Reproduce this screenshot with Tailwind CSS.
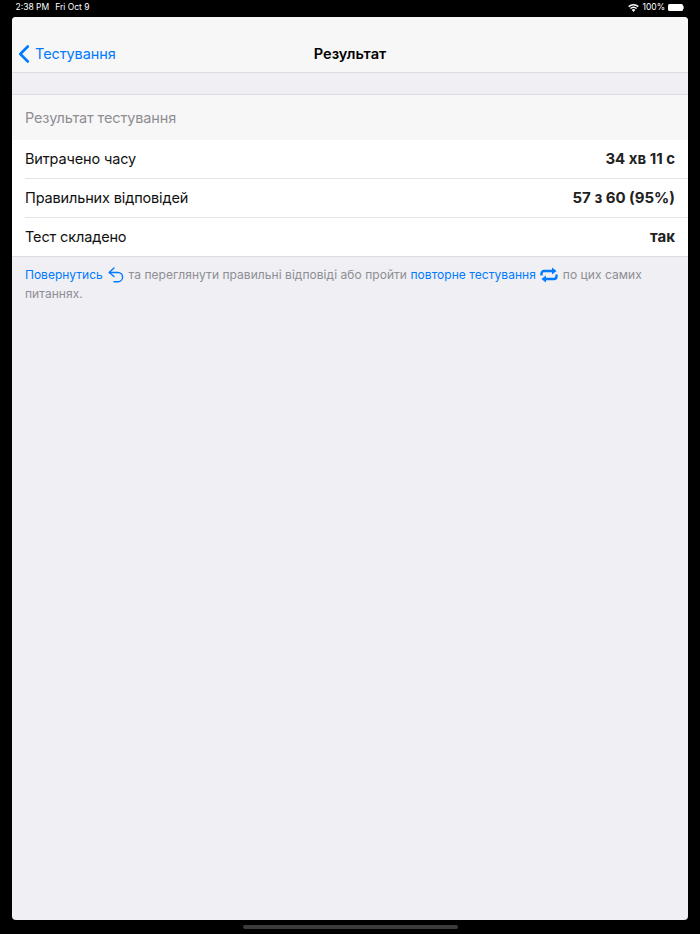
<!DOCTYPE html>
<html lang="uk">
<head>
  <meta charset="UTF-8" />
  <title>Результат</title>
  <script src="https://cdn.jsdelivr.net/npm/@tailwindcss/browser@4"></script>
</head>
<body class="bg-black font-[Inter,'Noto_Sans',sans-serif] w-[700px] h-[934px] overflow-hidden flex flex-col">
  <!-- status bar -->
  <div class="h-[15px] px-[15.5px] flex items-center justify-between text-white text-[8.5px] leading-none">
    <div class="flex gap-[6px]"><span>2:38 PM</span><span>Fri Oct 9</span></div>
    <div class="flex items-center gap-[3px] pr-[0.5px]">
      <svg width="11" height="8" viewBox="0 0 11 8" fill="#fff"><path d="M5.5 8 3.7 5.9a2.7 2.7 0 0 1 3.6 0z"/><path d="M2.9 5.1 1.9 4a5.4 5.4 0 0 1 7.2 0l-1 1.1a4 4 0 0 0-5.2 0z"/><path d="M1.2 3.2.2 2.1a8 8 0 0 1 10.6 0l-1 1.1a6.5 6.5 0 0 0-8.6 0z"/></svg>
      <span>100%</span>
      <div class="flex items-center">
        <div class="w-[15px] h-[7px] bg-white rounded-[1.5px]"></div>
        <div class="w-[1px] h-[3px] bg-white/60"></div>
      </div>
    </div>
  </div>

  <!-- app window -->
  <div class="mx-[12px] mt-[2px] h-[902.5px] w-[676px] rounded-[4px] overflow-hidden bg-[#efeff4] flex flex-col">
    <header class="h-[56px] shrink-0 bg-[#f7f7f7] border-b border-[#dcdce0] flex items-center relative">
      <div class="flex items-center pl-[7px] pt-[19px] text-[#007aff] text-[14.5px] tracking-[-0.1px] leading-none gap-[5px]">
        <svg class="-translate-x-[0.5px]" width="11" height="18" viewBox="0 0 11 18" fill="none" stroke="#007aff" stroke-width="2.6" stroke-linecap="round" stroke-linejoin="round"><path d="M9.3 1.5 1.8 9l7.5 7.5"/></svg>
        <span class="pt-[1px]">Тестування</span>
      </div>
      <div class="absolute inset-x-0 top-0 pt-[28px] text-center text-[14.6px] leading-[18px] font-semibold text-black">Результат</div>
    </header>

    <div class="h-[22px] shrink-0 border-b border-[#dcdce0]"></div>

    <div class="h-[45px] shrink-0 bg-[#f7f7f7] px-[13px] flex items-center text-[14.5px] tracking-[-0.14px] text-[#8e8e93]">Результат тестування</div>

    <div class="bg-white border-b border-[#dcdce0] pl-[13px]">
      <div class="h-[39px] pt-[10px] pr-[13px] flex items-baseline justify-between border-b border-[#e4e4e7] text-[14.5px] leading-[18px] text-[#111]">
        <span class="tracking-[-0.14px]">Витрачено часу</span><span class="text-[15px] font-bold text-[#222]">34 хв 11 с</span>
      </div>
      <div class="h-[39px] pt-[10px] pr-[13px] flex items-baseline justify-between border-b border-[#e4e4e7] text-[14.5px] leading-[18px] text-[#111]">
        <span class="tracking-[-0.14px]">Правильних відповідей</span><span class="text-[15px] font-bold text-[#222]">57 з 60 (95%)</span>
      </div>
      <div class="h-[38px] pt-[10px] pr-[13px] flex items-baseline justify-between text-[14.5px] leading-[18px] text-[#111]">
        <span class="tracking-[-0.14px]">Тест складено</span><span class="text-[15px] font-bold text-[#222]">так</span>
      </div>
    </div>

    <p class="px-[13px] pt-[8px] text-[12px] leading-[19px] tracking-[0.05px] text-[#8e8e93]">
      <span class="text-[#007aff] tracking-normal">Повернутись</span>
      <svg class="inline-block align-baseline -my-[4px] ml-[2px] mr-[1px] h-[16px] w-[16px]" viewBox="0 0 16 16" fill="none" stroke="#007aff" stroke-width="1.4" stroke-linecap="round" stroke-linejoin="round"><path d="M6 1 1.2 5.5 6 9.5"/><path d="M1.5 5.5H10a4.6 4.6 0 0 1 0 9.2H6"/></svg>
      та переглянути правильні відповіді або пройти
      <span class="text-[#007aff]">повторне тестування</span>
      <svg class="inline-block align-baseline -my-[4px] mx-[1px] h-[16px] w-[18px]" viewBox="0 0 18 16" fill="none" stroke="#007aff" stroke-width="2.4" stroke-linejoin="round"><path d="M1.5 8.5V6.5a2.5 2.5 0 0 1 2.5-2.5h10"/><path d="M16.5 7.5v2a2.5 2.5 0 0 1-2.5 2.5H4"/><path d="M12 .6 16.6 4 12 7.4z" fill="#007aff" stroke="none"/><path d="M6 8.6 1.4 12 6 15.4z" fill="#007aff" stroke="none"/></svg>
      по цих самих питаннях.
    </p>
  </div>

  <!-- home indicator -->
  <div class="mt-[5.5px] mx-auto w-[215px] h-[4px] rounded-full bg-[#3c3c3e]"></div>
</body>
</html>
